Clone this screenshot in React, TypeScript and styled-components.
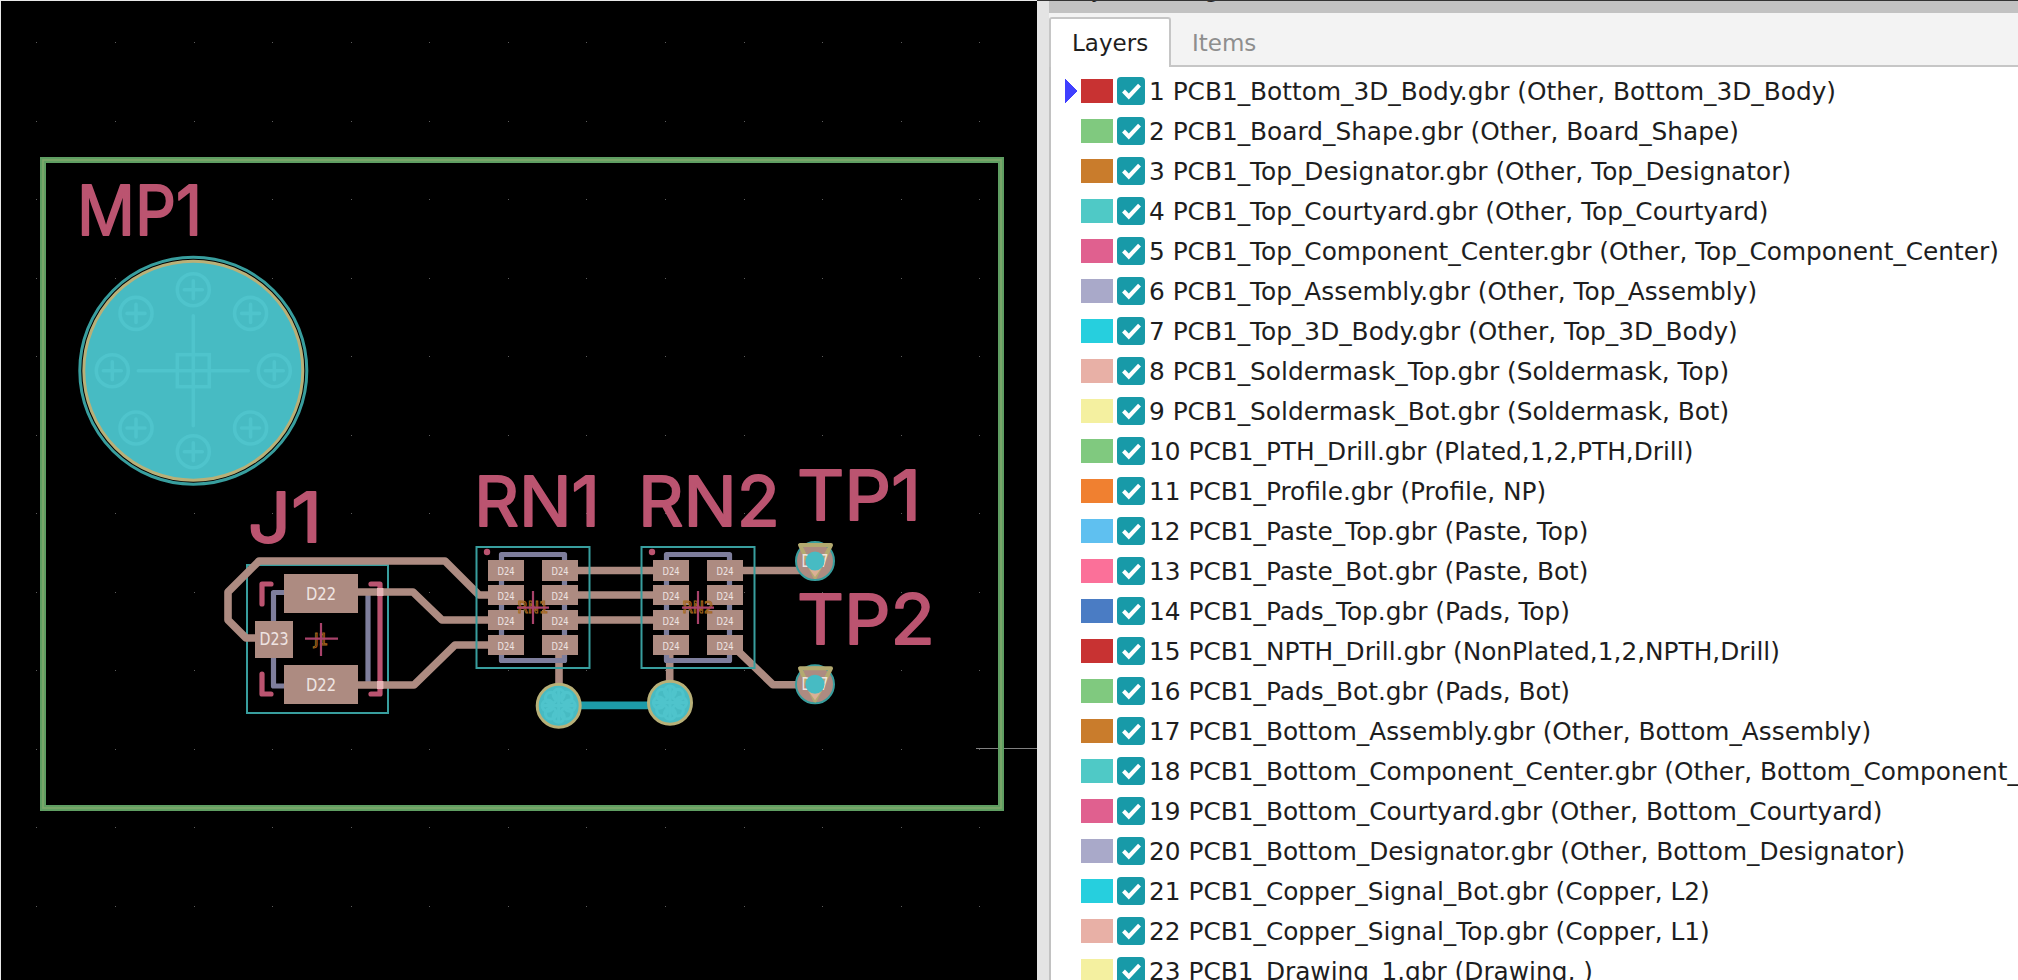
import React from "react";
import styled, { createGlobalStyle } from "styled-components";

const Global = createGlobalStyle`
  html, body { margin: 0; padding: 0; background: #fff; overflow: hidden; }
`;

const Frame = styled.div`
  display: flex;
  width: 2018px;
  height: 980px;
  overflow: hidden;
  font-family: "DejaVu Sans", "Noto Sans", sans-serif;
`;

const Canvas = styled.div`
  flex: none;
  width: 1037px;
  height: 980px;
  box-sizing: border-box;
  border-top: 1px solid #e8e8e8;
  border-left: 1px solid #e8e8e8;
  background: #000;
`;

const Board = styled.svg`
  display: block;
  width: 1036px;
  height: 979px;
`;

const Panel = styled.div`
  flex: 1;
  min-width: 0;
  display: flex;
  box-sizing: border-box;
  border-top: 1px solid #333;
  height: 980px;
`;

const Gutter = styled.div`
  flex: none;
  width: 12px;
  background: #e4e4e4;
`;

const PanelMain = styled.div`
  flex: 1;
  min-width: 0;
  display: flex;
  flex-direction: column;
`;

const TitleBar = styled.div`
  flex: none;
  height: 12px;
  background: #c2c2c2;
  overflow: hidden;
  padding-left: 16px;
`;

const TitleText = styled.div`
  margin-top: -26px;
  font-size: 22px;
  line-height: 32px;
  color: #222;
  white-space: nowrap;
`;

const TabBar = styled.div`
  flex: none;
  height: 52px;
  display: flex;
  align-items: flex-end;
  background: #f3f3f3;
  border-bottom: 2px solid #c6c6c6;
`;

const Tab = styled.div<{ $active?: boolean }>`
  box-sizing: border-box;
  height: ${(p) => (p.$active ? "50px" : "48px")};
  width: ${(p) => (p.$active ? "122px" : "auto")};
  margin-bottom: ${(p) => (p.$active ? "-2px" : "0")};
  padding: ${(p) => (p.$active ? "6px" : "8px")} 0 0 21px;
  background: ${(p) => (p.$active ? "#fff" : "transparent")};
  border: ${(p) => (p.$active ? "2px solid #c6c6c6" : "0")};
  border-bottom: 0;
  border-radius: 3px 3px 0 0;
  color: ${(p) => (p.$active ? "#1e1e1e" : "#8e8e8e")};
  font-size: 23px;
  line-height: 36px;
`;

const LayerList = styled.div`
  flex: 1;
  min-height: 0;
  overflow: hidden;
  background: #fff;
  border-left: 2px solid #c2c2c2;
  padding-top: 4px;
`;

const Row = styled.div`
  display: flex;
  align-items: center;
  height: 40px;
  padding-left: 14px;
  white-space: nowrap;
`;

const ArrowSlot = styled.div`
  flex: none;
  width: 16px;
  height: 24px;
`;

const Swatch = styled.div<{ $color: string }>`
  flex: none;
  width: 32px;
  height: 24px;
  background: ${(p) => p.$color};
`;

const CheckBox = styled.div`
  flex: none;
  width: 28px;
  height: 28px;
  margin-left: 4px;
  border-radius: 4px;
  background: #189aa8;
`;

const LayerName = styled.span`
  margin-left: 4px;
  padding-top: 1px;
  font-size: 24.8px;
  line-height: 40px;
  color: #1e1e1e;
`;

/* ---- PCB drawing primitives ---- */
const Trace = styled.path`
  fill: none;
  stroke: #ad8b81;
  stroke-width: 7.6;
  stroke-linejoin: round;
`;
const Pad = styled.rect`
  fill: #ad8b81;
`;
const Fab = styled.path`
  fill: none;
  stroke: #7e7e9c;
  stroke-width: 5.2;
  stroke-linejoin: round;
`;
const Silk = styled.path`
  fill: none;
  stroke: #bb5470;
  stroke-width: 5.2;
  stroke-linecap: round;
  stroke-linejoin: round;
`;
const Courtyard = styled.rect`
  fill: none;
  stroke: #389e9e;
  stroke-width: 2;
`;
const Outline = styled.rect<{ $color: string; $w: number }>`
  fill: none;
  stroke: ${(p) => p.$color};
  stroke-width: ${(p) => p.$w};
`;
const CenterMark = styled.path`
  fill: none;
  stroke: #a8426a;
  stroke-width: 2.2;
`;
const RefText = styled.text`
  font-family: Inter, "Noto Sans", sans-serif;
  font-weight: 400;
  font-size: 69px;
  fill: #bb5470;
  stroke: #bb5470;
  stroke-width: 1.8;
  stroke-linejoin: round;
`;
const PadText = styled.text<{ $size: number }>`
  font-family: "DejaVu Sans", sans-serif;
  font-size: ${(p) => p.$size}px;
  fill: #efe4e1;
  text-anchor: middle;
`;
const FabText = styled.text`
  font-family: "DejaVu Sans", sans-serif;
  font-size: 15px;
  fill: none;
  stroke: #a5681e;
  stroke-width: 1;
  text-anchor: middle;
`;
const GridDot = styled.rect`
  fill: #5c5c5c;
`;
const Disc = styled.circle<{ $fill: string; $stroke?: string; $w?: number }>`
  fill: ${(p) => p.$fill};
  stroke: ${(p) => p.$stroke ?? "none"};
  stroke-width: ${(p) => p.$w ?? 0};
`;
const Marking = styled.g<{ $w: number }>`
  fill: none;
  stroke: #4fc4cc;
  stroke-width: ${(p) => p.$w};
  stroke-linecap: round;
`;
const Bar = styled.path`
  fill: none;
  stroke: #1d9ba8;
  stroke-width: 7.6;
`;
const TriangleMark = styled.polygon`
  fill: none;
  stroke: #b4aa70;
  stroke-width: 4;
  stroke-linejoin: round;
`;
const TrianglePeach = styled.polygon`
  fill: #dcb096;
`;
const Hairline = styled.rect`
  fill: #808080;
`;
const Overlap = styled.rect`
  fill: #e6b4b6;
`;

const layers: [string, string][] = [
  ["#c83232", "1 PCB1_Bottom_3D_Body.gbr (Other, Bottom_3D_Body)"],
  ["#80c97f", "2 PCB1_Board_Shape.gbr (Other, Board_Shape)"],
  ["#c97c2c", "3 PCB1_Top_Designator.gbr (Other, Top_Designator)"],
  ["#4fc9c6", "4 PCB1_Top_Courtyard.gbr (Other, Top_Courtyard)"],
  ["#e0608f", "5 PCB1_Top_Component_Center.gbr (Other, Top_Component_Center)"],
  ["#a9a9c9", "6 PCB1_Top_Assembly.gbr (Other, Top_Assembly)"],
  ["#26cfde", "7 PCB1_Top_3D_Body.gbr (Other, Top_3D_Body)"],
  ["#e8b0a6", "8 PCB1_Soldermask_Top.gbr (Soldermask, Top)"],
  ["#f4f0a0", "9 PCB1_Soldermask_Bot.gbr (Soldermask, Bot)"],
  ["#80c97f", "10 PCB1_PTH_Drill.gbr (Plated,1,2,PTH,Drill)"],
  ["#f08030", "11 PCB1_Profile.gbr (Profile, NP)"],
  ["#5fc0f0", "12 PCB1_Paste_Top.gbr (Paste, Top)"],
  ["#fb7099", "13 PCB1_Paste_Bot.gbr (Paste, Bot)"],
  ["#4a7cc4", "14 PCB1_Pads_Top.gbr (Pads, Top)"],
  ["#c83232", "15 PCB1_NPTH_Drill.gbr (NonPlated,1,2,NPTH,Drill)"],
  ["#80c97f", "16 PCB1_Pads_Bot.gbr (Pads, Bot)"],
  ["#c97c2c", "17 PCB1_Bottom_Assembly.gbr (Other, Bottom_Assembly)"],
  ["#4fc9c6", "18 PCB1_Bottom_Component_Center.gbr (Other, Bottom_Component_Center)"],
  ["#e0608f", "19 PCB1_Bottom_Courtyard.gbr (Other, Bottom_Courtyard)"],
  ["#a9a9c9", "20 PCB1_Bottom_Designator.gbr (Other, Bottom_Designator)"],
  ["#26cfde", "21 PCB1_Copper_Signal_Bot.gbr (Copper, L2)"],
  ["#e8b0a6", "22 PCB1_Copper_Signal_Top.gbr (Copper, L1)"],
  ["#f4f0a0", "23 PCB1_Drawing_1.gbr (Drawing, )"],
];

const gridXs = Array.from({ length: 13 }, (_, i) => 36.3 + i * 78.6);
const gridYs = Array.from({ length: 12 }, (_, i) => 42 + i * 78.5);

function Markings({ cx, cy, dist, r, arm, cross, w, square }: { cx: number; cy: number; dist: number; r: number; arm: number; cross: number; w: number; square?: number }) {
  return (
    <Marking $w={w}>
      {Array.from({ length: 8 }, (_, i) => {
        const a = (i * Math.PI) / 4;
        const x = cx + dist * Math.cos(a);
        const y = cy + dist * Math.sin(a);
        return (
          <g key={i}>
            <circle cx={x} cy={y} r={r} />
            {arm ? <path d={`M${x - arm} ${y}H${x + arm}M${x} ${y - arm}V${y + arm}`} /> : null}
          </g>
        );
      })}
      <path d={`M${cx - cross} ${cy}H${cx + cross}M${cx} ${cy - cross}V${cy + cross}`} />
      {square ? <rect x={cx - square} y={cy - square} width={square * 2} height={square * 2} /> : null}
    </Marking>
  );
}

const padRows = [560, 585, 610, 635];

function ResistorNet({ dx, label }: { dx: number; label: string }) {
  return (
    <g transform={`translate(${dx} 0)`}>
      <Courtyard x={476.5} y={547} width={113} height={121} />
      <Fab d="M501.5 554.5H564.5V660.5H501.5Z" />
      <circle cx={487} cy={552} r={3.2} fill="#bb5470" />
      {padRows.map((y) => (
        <g key={y}>
          <Pad x={488} y={y} width={36} height={y === 560 ? 21 : 20} />
          <Pad x={542} y={y} width={36} height={y === 560 ? 21 : 20} />
          <PadText $size={11} x={506} y={y + 14.5} textLength={17} lengthAdjust="spacingAndGlyphs">D24</PadText>
          <PadText $size={11} x={560} y={y + 14.5} textLength={17} lengthAdjust="spacingAndGlyphs">D24</PadText>
        </g>
      ))}
      <FabText x={533} y={613}>{label}</FabText>
      <CenterMark d="M517 607.7H549M533 591V624" />
    </g>
  );
}

function TestPoint({ cy }: { cy: number }) {
  return (
    <g>
      <Disc cx={815} cy={cy} r={19} $fill="#ad8b81" $stroke="#389e9e" $w={2} />
      <TriangleMark points={`800,${cy - 16} 831,${cy - 16} 815,${cy + 16}`} />
      <TrianglePeach points={`808,${cy + 6} 822,${cy + 6} 815,${cy + 16}`} />
      <PadText $size={17} x={815} y={cy + 6} textLength={27} lengthAdjust="spacingAndGlyphs">D27</PadText>
      <Disc cx={815} cy={cy} r={9.5} $fill="#47bbc3" />
    </g>
  );
}

function Via({ cx, cy }: { cx: number; cy: number }) {
  return (
    <g>
      <Disc cx={cx} cy={cy} r={21.5} $fill="#47bbc3" $stroke="#b8b078" $w={3} />
      <Markings cx={cx} cy={cy} dist={11} r={5.5} arm={0} cross={15} w={3.2} />
    </g>
  );
}

export default function App() {
  return (
    <Frame>
      <Global />
      <Canvas>
        <Board viewBox="1 1 1036 979">
          {gridXs.map((x) =>
            gridYs.map((y) => <GridDot key={`${x}-${y}`} x={Math.round(x)} y={Math.round(y)} width={1} height={1} />)
          )}
          <Hairline x={976} y={748} width={61} height={1} />
          <Outline x={43} y={160} width={958} height={648} $color="#5f9e62" $w={6} />
          <Outline x={43} y={160} width={958} height={648} $color="#7fa86c" $w={1.6} />

          <RefText x={77} y={235} textLength={125} lengthAdjust="spacingAndGlyphs">MP1</RefText>
          <RefText x={248} y={542} textLength={74} lengthAdjust="spacingAndGlyphs">J1</RefText>
          <RefText x={474} y={526} textLength={126} lengthAdjust="spacingAndGlyphs">RN1</RefText>
          <RefText x={638} y={526} textLength={142} lengthAdjust="spacingAndGlyphs">RN2</RefText>
          <RefText x={797} y={520} textLength={124} lengthAdjust="spacingAndGlyphs">TP1</RefText>
          <RefText x={797} y={644} textLength={138} lengthAdjust="spacingAndGlyphs">TP2</RefText>

          <Disc cx={193.3} cy={370.7} r={113.5} $fill="#000" $stroke="#389e9e" $w={3} />
          <Disc cx={193.3} cy={370.7} r={109.5} $fill="#47bbc3" $stroke="#b8b078" $w={3} />
          <Markings cx={193.3} cy={370.7} dist={81} r={16} arm={9} cross={55} w={3.6} square={16} />

          {/* J1 */}
          <Courtyard x={247} y={565} width={141} height={148} />
          <Fab d="M284 592.5H273.5V621M273.5 658V686H284" />
          <Fab d="M368 592V686" />
          <Trace d="M258 638H246L228 620V592L259 561H445L479 595H492" />
          <Trace d="M356 592H413L442 620H492" />
          <Trace d="M356 685H414L455 645H492" />
          <Silk d="M262 604V584H271" />
          <Silk d="M262 674V694H271" />
          <Silk d="M371 584H380V694H371" />
          <Overlap x={377} y={588} width={6.4} height={8} />
          <Overlap x={377} y={681} width={6.4} height={8} />
          <Pad x={284} y={574} width={74} height={39} />
          <Pad x={284} y={665} width={74} height={39} />
          <Pad x={255} y={621} width={38} height={37} />
          <PadText $size={18} x={321} y={599.5} textLength={30} lengthAdjust="spacingAndGlyphs">D22</PadText>
          <PadText $size={18} x={321} y={690.5} textLength={30} lengthAdjust="spacingAndGlyphs">D22</PadText>
          <PadText $size={18} x={274} y={645} textLength={29} lengthAdjust="spacingAndGlyphs">D23</PadText>
          <FabText x={321} y={645}>J1</FabText>
          <CenterMark d="M305 638.7H338M321 623V656" />

          {/* traces between parts */}
          <Trace d="M578 570.5H653M578 595H653M578 620H653" />
          <Trace d="M743 570.5H800" />
          <Trace d="M738 651L773 684.7H800" />
          <Trace d="M559 655V690" />
          <Trace d="M669.7 655V688" />
          <Bar d="M578 705.4H652" />

          <ResistorNet dx={0} label="RN1" />
          <ResistorNet dx={165} label="RN2" />

          <Via cx={558.7} cy={705.7} />
          <Via cx={670} cy={702.7} />
          <TestPoint cy={561} />
          <TestPoint cy={684.3} />
        </Board>
      </Canvas>
      <Panel>
        <Gutter />
        <PanelMain>
          <TitleBar>
            <TitleText>Layers Manager</TitleText>
          </TitleBar>
          <TabBar>
            <Tab $active>Layers</Tab>
            <Tab>Items</Tab>
          </TabBar>
          <LayerList>
            {layers.map(([color, name], i) => (
              <Row key={name}>
                <ArrowSlot>
                  {i === 0 ? (
                    <svg width="12" height="24" viewBox="0 0 12 24" shapeRendering="crispEdges">
                      <polygon points="0,0 12,12 0,24" fill="#4040ff" />
                    </svg>
                  ) : null}
                </ArrowSlot>
                <Swatch $color={color} />
                <CheckBox>
                  <svg width="28" height="28" viewBox="0 0 28 28">
                    <path d="M6.5 14L11.8 19.5L22.5 8.2" fill="none" stroke="#fff" strokeWidth="4" />
                  </svg>
                </CheckBox>
                <LayerName>{name}</LayerName>
              </Row>
            ))}
          </LayerList>
        </PanelMain>
      </Panel>
    </Frame>
  );
}
